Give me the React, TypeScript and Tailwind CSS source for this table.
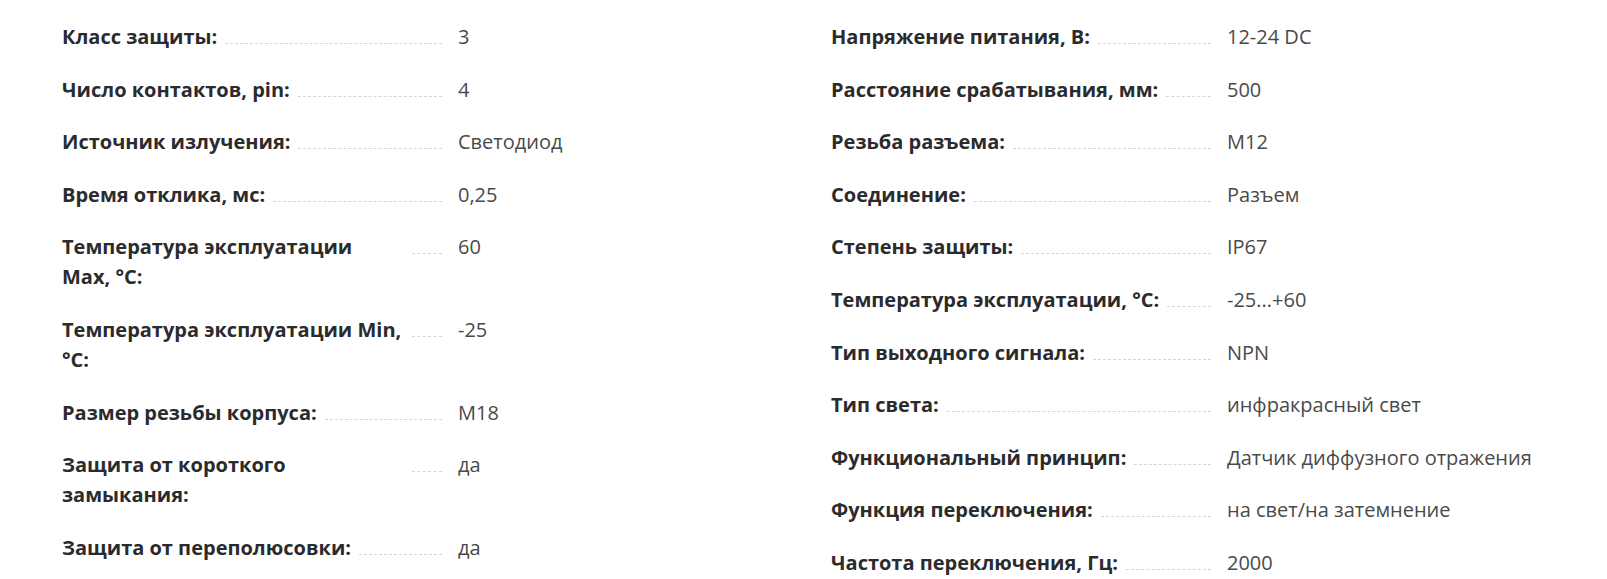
import React from 'react';

type Spec = { label: string; value: string };

const left: Spec[] = [
  { label: 'Класс защиты:', value: '3' },
  { label: 'Число контактов, pin:', value: '4' },
  { label: 'Источник излучения:', value: 'Светодиод' },
  { label: 'Время отклика, мс:', value: '0,25' },
  { label: 'Температура эксплуатации Max, °C:', value: '60' },
  { label: 'Температура эксплуатации Min, °C:', value: '-25' },
  { label: 'Размер резьбы корпуса:', value: 'M18' },
  { label: 'Защита от короткого замыкания:', value: 'да' },
  { label: 'Защита от переполюсовки:', value: 'да' },
];

const right: Spec[] = [
  { label: 'Напряжение питания, В:', value: '12-24 DC' },
  { label: 'Расстояние срабатывания, мм:', value: '500' },
  { label: 'Резьба разъема:', value: 'M12' },
  { label: 'Соединение:', value: 'Разъем' },
  { label: 'Степень защиты:', value: 'IP67' },
  { label: 'Температура эксплуатации, °C:', value: '-25...+60' },
  { label: 'Тип выходного сигнала:', value: 'NPN' },
  { label: 'Тип света:', value: 'инфракрасный свет' },
  { label: 'Функциональный принцип:', value: 'Датчик диффузного отражения' },
  { label: 'Функция переключения:', value: 'на свет/на затемнение' },
  { label: 'Частота переключения, Гц:', value: '2000' },
];

const Row: React.FC<Spec> = ({ label, value }) => (
  <div className="flex items-start">
    <div className="flex w-[380px] shrink-0 items-start">
      <span className="font-bold text-[#2b2b2e]">{label}</span>
      <div className="ml-2 h-[22px] min-w-[30px] flex-1 border-b border-dashed border-[#d6d6d6]" />
    </div>
    <div className="ml-4 text-[#4a4a4a]">{value}</div>
  </div>
);

const App: React.FC = () => {
  return (
    <div
      className="min-h-screen bg-white pl-[62px] pt-[22px] text-[20px] leading-[30px]"
      style={{ fontFamily: '"Open Sans", "Liberation Sans", sans-serif' }}
    >
      <div className="grid grid-cols-[769px_769px]">
        <div className="flex flex-col gap-[22.6px]">
          {left.map(s => (
            <Row key={s.label} {...s} />
          ))}
        </div>
        <div className="flex flex-col gap-[22.6px]">
          {right.map(s => (
            <Row key={s.label} {...s} />
          ))}
        </div>
      </div>
    </div>
  );
};

export default App;
